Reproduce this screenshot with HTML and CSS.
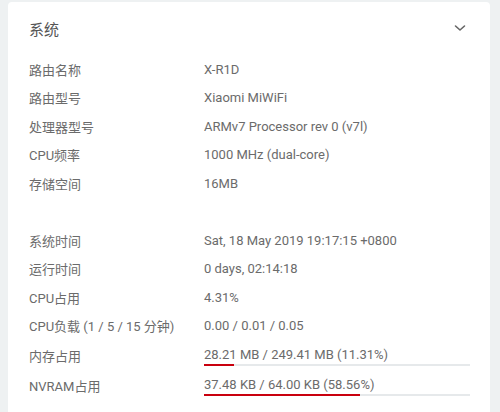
FILE: index.html
```html
<!DOCTYPE html>
<html lang="zh-CN">
<head>
    <meta charset="UTF-8">
    <meta name="viewport" content="width=device-width, initial-scale=1.0">
    <title>系统</title>
    <link rel="stylesheet" href="styles.css">
</head>
<body>

    <div class="card">
        <!-- 标题 -->
        <div class="card-head">
            <h3>系统</h3>
            <svg class="chevron" width="12" height="8" viewBox="0 0 12 8">
                <path d="M1.5 2 L6 6 L10.5 2" fill="none" stroke="#666" stroke-width="1.6" stroke-linecap="round" stroke-linejoin="round"/>
            </svg>
        </div>

        <div class="row"><div class="label">路由名称</div><div class="value">X-R1D</div></div>
        <div class="row"><div class="label">路由型号</div><div class="value">Xiaomi MiWiFi</div></div>
        <div class="row"><div class="label">处理器型号</div><div class="value">ARMv7 Processor rev 0 (v7l)</div></div>
        <div class="row"><div class="label">CPU频率</div><div class="value">1000 MHz (dual-core)</div></div>
        <div class="row"><div class="label">存储空间</div><div class="value">16MB</div></div>
        <div class="row"></div>
        <div class="row"><div class="label">系统时间</div><div class="value">Sat, 18 May 2019 19:17:15 +0800</div></div>
        <div class="row"><div class="label">运行时间</div><div class="value">0 days, 02:14:18</div></div>
        <div class="row"><div class="label">CPU占用</div><div class="value">4.31%</div></div>
        <div class="row"><div class="label">CPU负载 (1 / 5 / 15 分钟)</div><div class="value">0.00 / 0.01 / 0.05</div></div>

        <div class="row row-bar">
            <div class="label">内存占用</div>
            <div class="value progress">
                <span>28.21 MB / 249.41 MB (11.31%)</span>
                <div class="track"><div class="fill" style="width: 11.31%"></div></div>
            </div>
        </div>
        <div class="row row-bar">
            <div class="label">NVRAM占用</div>
            <div class="value progress">
                <span>37.48 KB / 64.00 KB (58.56%)</span>
                <div class="track"><div class="fill" style="width: 58.56%"></div></div>
            </div>
        </div>
    </div>

</body>
</html>
```

FILE: styles.css
```css
* { margin: 0; padding: 0; box-sizing: border-box; }
html, body { height: 412px; overflow: hidden; }
body { background: #eef1f2; font-family: Roboto, "Noto Sans CJK SC", sans-serif; font-size: 13px; color: #6b6b6b; padding: 2px 10px 0 8px; }
.card { background: #fff; border-radius: 4px 4px 0 0; padding: 18px 20px 0 21px; height: 410px; overflow: hidden; }
.card-head { display: flex; justify-content: space-between; align-items: center; height: 20px; margin-bottom: 15px; }
.card-head h3 { font-size: 15px; font-weight: normal; color: #555; line-height: 20px; }
.chevron { margin-right: 4px; margin-top: -4px; }
.row { display: flex; align-items: center; height: 28.5px; }
.label { width: 175px; flex: none; white-space: nowrap; }
.value { flex: 1; white-space: nowrap; }
.row-bar { height: 30px; }
.progress { align-self: flex-start; padding-top: 7px; }
.progress span { display: block; line-height: 16px; }
.track { height: 2px; margin-top: 1px; background: #e6e9eb; }
.fill { height: 2px; background: #c9000e; }
```
